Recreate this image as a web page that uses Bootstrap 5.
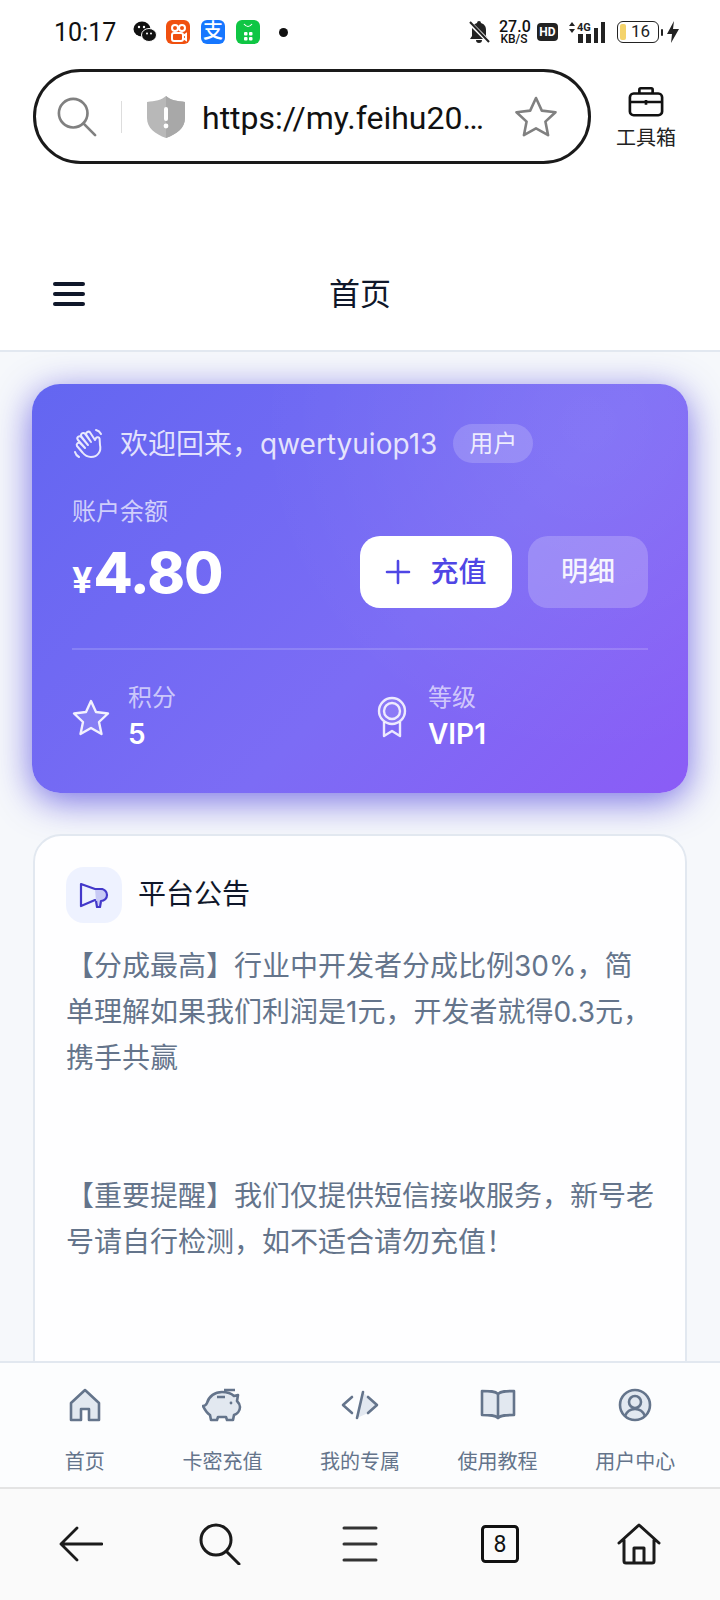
<!DOCTYPE html>
<html lang="zh-CN">
<head>
    <meta charset="UTF-8">
    <meta name="viewport" content="width=device-width, initial-scale=1.0">
    <title>首页</title>
    <link href="https://cdn.jsdelivr.net/npm/bootstrap@5.3.3/dist/css/bootstrap.min.css" rel="stylesheet">
    <style>
        html, body { height: 100%; margin: 0; }
        body { font-family: Inter, "Noto Sans CJK SC", sans-serif; background: #f6f8fb; overflow: hidden; }
        .phone { width: 720px; height: 1600px; overflow: hidden; }

        /* android status bar */
        .statusbar { height: 68px; padding: 20px 40px 0 54px; background: #fff; }
        .sb-time { font: 400 25px/25px Roboto, sans-serif; color: #111; width: 79px; }
        .sb-chat { margin-right: 9px; }
        .sb-app { width: 24px; height: 24px; border-radius: 6px; color: #fff; font-size: 20px; font-weight: 500; line-height: 23px; text-align: center; margin-right: 11px; }
        .sb-orange { background: #f0500f; }
        .sb-blue { background: #1677ff; }
        .sb-green { background: #0fc644; margin-right: 0; }
        .sb-dot { width: 9px; height: 9px; border-radius: 50%; background: #111; margin: 8px 0 0 19px; }
        .sb-right { height: 24px; }
        .sb-speed { font: 500 16px/14px Roboto, sans-serif; color: #111; text-align: center; width: 30px; margin-left: 8px; }
        .sb-speed small { display: block; font-size: 12px; line-height: 11px; }
        .sb-hd { width: 21px; height: 18px; border-radius: 4px; background: #222; color: #fff; font: 700 12px/18px Roboto, sans-serif; text-align: center; margin-left: 8px; }
        .sb-net { margin-left: 8px; }
        .sb-batt { width: 42px; height: 22px; border: 1.5px solid #222; border-radius: 6px; font: 400 17px/19px Roboto, sans-serif; color: #222; padding-left: 13px; margin-left: 11px; position: relative; }
        .sb-batt::before { content: ""; position: absolute; left: 2px; top: 2px; bottom: 2px; width: 6px; border-radius: 2px; background: #f4d36b; }
        .sb-nub { width: 2px; height: 7px; background: #222; border-radius: 1px; margin: 0 3px 0 2px; }

        /* browser url bar */
        .urlrow { height: 129px; padding: 1px 0 0 33px; background: #fff; align-items: flex-start; }
        .urlpill { width: 558px; height: 95px; border: 3px solid #1a1a1a; border-radius: 48px; padding: 0 31px 0 21px; }
        .urlsep { width: 1px; height: 32px; background: #ddd; margin: 0 25px 0 24px; }
        .urltext { font: 400 32px/40px Roboto, sans-serif; color: #111; margin: 2px 0 0 17px; width: 300px; white-space: nowrap; }
        .toolbox { width: 110px; padding-top: 17px; font-size: 20px; line-height: 26px; color: #222; }
        .toolbox svg { margin-bottom: 7px; }

        /* app header */
        .apphead { height: 155px; padding: 74px 0 0; background: #fff; border-bottom: 2px solid #e2e8f0; position: relative; }
        .apphead h1 { font-size: 31px; line-height: 46px; font-weight: 400; color: #0f172a; margin: 0; text-align: center; }
        .burger { position: absolute; left: 53px; top: 85px; width: 32px; }
        .burger span { display: block; height: 4px; border-radius: 2px; background: #0f172a; margin-bottom: 6px; }

        /* page */
        .pagebody { flex: 1 1 auto; min-height: 0; overflow: hidden; padding: 32px 32px 0; }
        .balance { height: 409px; border-radius: 28px; padding: 40px; color: #fff; background: radial-gradient(circle at 85% 10%, rgba(255, 255, 255, .07), rgba(255, 255, 255, 0) 50%), linear-gradient(135deg, #6366f1 0%, #7c6cf5 58%, #8b5cf6 100%); box-shadow: 0 8px 36px rgba(70, 60, 220, .72); }
        .welcome { height: 39px; font-size: 28px; color: rgba(255, 255, 255, .82); }
        .role-tag { height: 39px; width: 80px; margin-left: 16px; border-radius: 20px; background: rgba(255, 255, 255, .18); font-size: 24px; line-height: 39px; text-align: center; color: rgba(255, 255, 255, .85); }
        .bal-label { font-size: 24px; line-height: 36px; margin-top: 31px; color: rgba(255, 255, 255, .7); }
        .bal-row { height: 72px; margin-top: 6px; }
        .bal-num { font-size: 57px; font-weight: 800; line-height: 72px; padding-top: 8px; letter-spacing: -1px; }
        .bal-num small { font-size: 36px; font-weight: 700; margin-right: 2px; }
        .btn-topup, .btn-detail { height: 72px; border-radius: 20px; border: 0; font-size: 27px; font-weight: 500; }
        .btn-topup { width: 152px; background: #fff; color: #4f46e5; font-size: 28px; }
        .btn-gap { column-gap: 19px; }
        .btn-detail { width: 120px; margin-left: 16px; background: rgba(255, 255, 255, .2); color: rgba(255, 255, 255, .92); }
        .bal-line { height: 2px; margin: 40px 0 30px; background: rgba(255, 255, 255, .16); }
        .stats { display: grid; grid-template-columns: 1fr 1fr; gap: 24px; }
        .stat-ico { width: 40px; margin-right: 16px; }
        .stat-label { font-size: 24px; line-height: 36px; color: rgba(255, 255, 255, .65); }
        .stat-val { font-size: 28px; line-height: 37px; font-weight: 600; }

        .notice { height: 700px; margin: 41px 1px 0; border: 2px solid #e2e8f0; border-radius: 28px; background: rgba(255, 255, 255, .85); padding: 31px 31px; position: relative; }
        .notice-ico { width: 56px; height: 56px; border-radius: 18px; background: #eef2ff; }
        .notice h2 { font-size: 28px; font-weight: 400; color: #0f172a; margin: 0 0 0 16px; }
        .notice-text { margin-top: 20px; font-size: 28px; line-height: 46px; color: #64748b; }
        .notice-text p { margin: 0 0 92px; }

        /* app tabbar */
        .tabbar { height: 126px; padding: 0 16px; background: #fcfdfe; border-top: 2px solid #e2e8f0; display: grid; grid-template-columns: repeat(5, 1fr); position: relative; }
        .tabitem { padding-top: 25px; font-size: 20px; line-height: 28px; color: #64748b; }
        .tabitem svg { display: block; margin: 0 auto 26px; }

        /* browser toolbar */
        .browserbar { height: 113px; padding: 0 11px 2px; background: #fafafa; border-top: 2px solid #e4e4e4; display: grid; grid-template-columns: repeat(5, 1fr); }
    </style>
</head>
<body>
<div class="phone d-flex flex-column">

    <div class="statusbar d-flex align-items-start flex-shrink-0">
        <div class="sb-time">10:17</div>
        <svg class="sb-chat" width="24" height="24" viewBox="0 0 24 24"><ellipse cx="9" cy="9" rx="8.500" ry="7.500" fill="#111"/><ellipse cx="16" cy="15" rx="7.500" ry="6.500" fill="#111" stroke="#fff"/><circle cx="6" cy="7" r="1.200" fill="#fff"/><circle cx="11" cy="7" r="1.200" fill="#fff"/><circle cx="14" cy="13.500" r="1" fill="#fff"/><circle cx="18" cy="13.500" r="1" fill="#fff"/></svg>
        <div class="sb-app sb-orange"><svg width="24" height="24" viewBox="0 0 24 24" fill="none" stroke="#fff" stroke-width="2"><circle cx="9" cy="7" r="3"/><circle cx="16" cy="7" r="3"/><rect x="6" y="12" width="11" height="8" rx="2"/><path d="M17 15l3-2v6l-3-2"/></svg></div>
        <div class="sb-app sb-blue">支</div>
        <div class="sb-app sb-green"><svg width="24" height="24" viewBox="0 0 24 24" fill="#fff"><path d="M8 3q4 5 8 0" fill="none" stroke="#fff" stroke-width="1.200"/><rect x="8" y="11" width="3.500" height="3.500" rx="1"/><rect x="13" y="11" width="3.500" height="3.500" rx="1"/><rect x="8" y="16" width="3.500" height="3.500" rx="1"/><rect x="13" y="16" width="3.500" height="3.500" rx="1"/></svg></div>
        <div class="sb-dot"></div>
        <div class="sb-right d-flex align-items-center ms-auto">
            <svg width="24" height="24" viewBox="0 0 24 24" fill="#222"><path d="M12 1a2 2 0 0 1 2 2c3 1 5 3 5 7v6l2 3H3l2-3v-6c0-4 2-6 5-7a2 2 0 0 1 2-2zM9 20h6a3 3 0 0 1-6 0z"/><path d="M2 2l20 20" stroke="#fff" stroke-width="4"/><path d="M3 2l19 20" stroke="#222" stroke-width="2"/></svg>
            <div class="sb-speed">27.0<small>KB/S</small></div>
            <div class="sb-hd">HD</div>
            <svg class="sb-net" width="40" height="24" viewBox="0 0 40 24" fill="#222"><path d="M3 6l3-4 3 4zM3 9l3 4 3-4z"/><rect x="12" y="14" width="5" height="9"/><rect x="20" y="14" width="5" height="9"/><rect x="28" y="8" width="4" height="15"/><rect x="35" y="2" width="4" height="21"/><text x="11" y="11" font-family="Roboto" font-size="11" font-weight="700">4G</text></svg>
            <div class="sb-batt">16</div>
            <div class="sb-nub"></div>
            <svg width="14" height="22" viewBox="0 0 14 22" fill="#222"><path d="M8 0L1 13h5l-1 9 8-14H7z"/></svg>
        </div>
    </div>

    <div class="urlrow d-flex flex-shrink-0">
        <div class="urlpill d-flex align-items-center">
            <svg width="40" height="40" viewBox="0 0 42 42" fill="none" stroke="#808080" stroke-width="2.800" stroke-linecap="round"><circle cx="17" cy="17" r="15"/><path d="M28 28l12 12"/></svg>
            <div class="urlsep"></div>
            <svg width="38" height="42" viewBox="0 0 38 42"><path d="M19 0c4 4 11 5 19 6v16c0 10-8 16-19 20C8 38 0 32 0 22V6c8-1 15-2 19-6z" fill="#b8b8b8"/><path d="M19 0c4 4 11 5 19 6v16c0 10-8 16-19 20z" fill="#a8a8a8"/><rect x="17" y="11" width="4" height="14" rx="2" fill="#fff"/><circle cx="19" cy="30" r="2.400" fill="#fff"/></svg>
            <div class="urltext">https://my.feihu20…</div>
            <svg class="ms-auto" width="42" height="42" viewBox="0 0 42 42" fill="none" stroke="#808080" stroke-width="2.600" stroke-linejoin="round"><path d="M21 2l5.800 12.600 13.700 1.600-10.100 9.400 2.700 13.600L21 32.400 8.900 39.200l2.700-13.600L1.500 16.200l13.700-1.600z"/></svg>
        </div>
        <div class="toolbox text-center">
            <svg class="d-block mx-auto" width="36" height="32" viewBox="0 0 38 32" fill="none" stroke="#111" stroke-width="2.800" stroke-linejoin="round"><rect x="2" y="7" width="34" height="23" rx="4"/><path d="M12 7V3a1.500 1.500 0 0 1 1.500-1.500h11A1.500 1.500 0 0 1 26 3v4M2 16h34M19 14v5"/></svg>
            工具箱
        </div>
    </div>

    <div class="apphead flex-shrink-0">
        <div class="burger"><span></span><span></span><span></span></div>
        <h1>首页</h1>
    </div>

    <div class="pagebody">
        <div class="balance">
            <div class="welcome d-flex align-items-center">
                <svg class="me-3" width="32" height="32" viewBox="0 0 32 32" fill="none" stroke="#fff" stroke-opacity=".85" stroke-width="2" stroke-linecap="round" stroke-linejoin="round"><path d="M13 20L6 12a2.200 2.200 0 0 1 3.300-3L16 17L9.500 8.500a2.200 2.200 0 0 1 3.400-2.800L19 14L14.500 7a2.200 2.200 0 0 1 3.600-2.500L23 12l1-2a2 2 0 0 1 3.600.8L28 17c1.500 6-2 12-9 12-4 0-6.500-2-8.500-4.500L5 18a2.200 2.200 0 0 1 3-3l5 5"/><path d="M24 2c2 .5 4 2 5 4M3 24c.5 2 2 4 4 5"/></svg>
                欢迎回来，qwertyuiop13
                <span class="role-tag">用户</span>
            </div>
            <div class="bal-label">账户余额</div>
            <div class="bal-row d-flex align-items-center">
                <div class="bal-num"><small>¥</small>4.80</div>
                <button class="btn-topup btn-gap ms-auto d-flex align-items-center justify-content-center" type="button">
                    <svg width="26" height="26" viewBox="0 0 26 26" stroke="#4f46e5" stroke-width="2.600" stroke-linecap="round"><path d="M13 2v22M2 13h22"/></svg>
                    充值
                </button>
                <button class="btn-detail" type="button">明细</button>
            </div>
            <div class="bal-line"></div>
            <div class="stats">
                <div class="d-flex align-items-center">
                    <div class="stat-ico"><svg width="38" height="38" viewBox="0 0 38 38" fill="#fff" fill-opacity=".14" stroke="#fff" stroke-opacity=".9" stroke-width="2.400" stroke-linejoin="round"><path d="M19 3l5 11 12 1.500-9 8.500 2.500 12L19 30l-10.500 6L11 24 2 15.500 14 14z"/></svg></div>
                    <div><div class="stat-label">积分</div><div class="stat-val">5</div></div>
                </div>
                <div class="d-flex align-items-center">
                    <div class="stat-ico"><svg width="40" height="42" viewBox="0 0 40 42" fill="none" stroke="#fff" stroke-opacity=".85" stroke-width="2.400" stroke-linejoin="round"><circle cx="20" cy="15" r="13" fill="#fff" fill-opacity=".1"/><circle cx="20" cy="15" r="8"/><path d="M12 26v14l8-5 8 5V26"/></svg></div>
                    <div><div class="stat-label">等级</div><div class="stat-val">VIP1</div></div>
                </div>
            </div>
        </div>

        <div class="notice">
            <div class="d-flex align-items-center">
                <div class="notice-ico d-flex align-items-center justify-content-center">
                    <svg width="30" height="28" viewBox="0 0 30 28" fill="none" stroke="#4338ca" stroke-width="2.200" stroke-linejoin="round"><path d="M2 3l14 5h7v11h-7L2 25z"/><path d="M16 8h6a6 6 0 0 1 6 6 6 6 0 0 1-6 6l-1 6h-3l-1-6" fill="#c7c9f5"/></svg>
                </div>
                <h2>平台公告</h2>
            </div>
            <div class="notice-text">
                <p>【分成最高】行业中开发者分成比例30%，简单理解如果我们利润是1元，开发者就得0.3元，携手共赢</p>
                <p>【重要提醒】我们仅提供短信接收服务，新号老号请自行检测，如不适合请勿充值！</p>
            </div>
        </div>
    </div>

    <div class="tabbar flex-shrink-0 text-center">
        <div class="tabitem">
            <svg width="34" height="34" viewBox="0 0 34 34" fill="#e2e8f0" stroke="#64748b" stroke-width="2.600" stroke-linejoin="round"><path d="M17 2L3 15v17h10V21h8v11h10V15z"/></svg>
            首页
        </div>
        <div class="tabitem">
            <svg width="40" height="34" viewBox="0 0 40 34" fill="#e2e8f0" stroke="#64748b" stroke-width="2.600" stroke-linejoin="round"><path d="M1 18c2 0 3-1 4-3 2-7 8-11 15-11 5 0 9 1 12 4l4-1-1 6c2 2 3 4 3 6 0 4-3 7-6 8l-1 5h-6l-1-3H16l-1 3H9l-1-5c-3-2-5-5-7-9z"/><path d="M15 9h8M22 2h11" fill="none"/><circle cx="29" cy="15" r="1.400" fill="#64748b" stroke="none"/></svg>
            卡密充值
        </div>
        <div class="tabitem">
            <svg width="38" height="34" viewBox="0 0 38 34" fill="none" stroke="#64748b" stroke-width="2.600" stroke-linecap="round" stroke-linejoin="round"><path d="M22 4l5 5 9 8-9 8-11 5z" fill="#e2e8f0" stroke="none"/><path d="M11 9l-9 8 9 8M27 9l9 8-9 8"/><path d="M22 4l-6 26"/></svg>
            我的专属
        </div>
        <div class="tabitem">
            <svg width="36" height="34" viewBox="0 0 36 34" fill="#e2e8f0" stroke="#64748b" stroke-width="2.600" stroke-linejoin="round"><path d="M18 6c-3-3-8-3-16-3v24c8 0 13 0 16 3 3-3 8-3 16-3V3c-8 0-13 0-16 3zM18 6v24"/></svg>
            使用教程
        </div>
        <div class="tabitem">
            <svg width="34" height="34" viewBox="0 0 34 34" fill="none" stroke="#64748b" stroke-width="2.600"><circle cx="17" cy="17" r="15" fill="#e2e8f0"/><circle cx="17" cy="14" r="6"/><path d="M7 28c2-5 6-7 10-7s8 2 10 7"/></svg>
            用户中心
        </div>
    </div>

    <div class="browserbar flex-shrink-0">
        <div class="d-flex align-items-center justify-content-center">
            <svg width="44" height="36" viewBox="0 0 44 36" fill="none" stroke="#1a1a1a" stroke-width="2.800" stroke-linecap="round" stroke-linejoin="round"><path d="M18 2L2 18l16 16M2 18h41"/></svg>
        </div>
        <div class="d-flex align-items-center justify-content-center">
            <svg width="42" height="42" viewBox="0 0 42 42" fill="none" stroke="#1a1a1a" stroke-width="3" stroke-linecap="round"><circle cx="17" cy="17" r="15"/><path d="M28 29l12 12"/></svg>
        </div>
        <div class="d-flex align-items-center justify-content-center">
            <svg width="36" height="36" viewBox="0 0 36 36" stroke="#333" stroke-width="3" stroke-linecap="round"><path d="M2 2h32M2 18h32M2 34h32"/></svg>
        </div>
        <div class="d-flex align-items-center justify-content-center">
            <svg width="38" height="38" viewBox="0 0 38 38"><rect x="1.500" y="1.500" width="35" height="35" rx="3" fill="none" stroke="#111" stroke-width="3"/><text x="19" y="27" text-anchor="middle" font-family="Roboto" font-size="23" fill="#111">8</text></svg>
        </div>
        <div class="d-flex align-items-center justify-content-center">
            <svg width="44" height="42" viewBox="0 0 44 42" fill="none" stroke="#1a1a1a" stroke-width="3" stroke-linejoin="round" stroke-linecap="round"><path d="M2 20L22 2l20 18M7 17v21a2 2 0 0 0 2 2h26a2 2 0 0 0 2-2V17M17 40V25h10v15"/></svg>
        </div>
    </div>

</div>
<script src="https://cdn.jsdelivr.net/npm/bootstrap@5.3.3/dist/js/bootstrap.bundle.min.js"></script>
</body>
</html>
